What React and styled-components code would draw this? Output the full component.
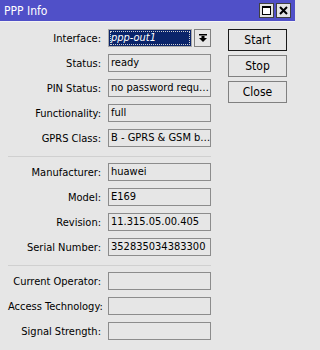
import React from "react";
import styled, { createGlobalStyle } from "styled-components";

const GlobalStyle = createGlobalStyle`
  html, body {
    margin: 0;
    padding: 0;
    background: #e6e6e6;
  }
  body {
    font-family: "DejaVu Sans Condensed", "DejaVu Sans", sans-serif;
    font-stretch: condensed;
    font-size: 11px;
    color: #000;
  }
`;

const Window = styled.div`
  width: 295px;
  height: 350px;
  background: #e6e6e6;
  display: flex;
  flex-direction: column;
  overflow: hidden;
`;

const TitleBar = styled.div`
  height: 22px;
  background: #5050c8;
  border-bottom: 1px solid #f4f4f4;
  display: flex;
  align-items: center;
  padding: 0 4px 0 4px;
  box-sizing: border-box;
`;

const Title = styled.div`
  flex: 1;
  color: #fff;
  font-size: 12px;
  padding-top: 1px;
`;

const TitleButtons = styled.div`
  display: flex;
  gap: 2px;
`;

const TitleButton = styled.div`
  width: 15px;
  height: 15px;
  box-sizing: border-box;
  background: #e4e4e4;
  border: 1px solid #404040;
  display: flex;
  align-items: center;
  justify-content: center;
`;

const Body = styled.div`
  display: flex;
  padding: 7px 0 0 8px;
  gap: 17px;
`;

const Form = styled.div`
  width: 203px;
  display: flex;
  flex-direction: column;
`;

const Section = styled.div`
  display: grid;
  grid-template-columns: 93px 103px;
  column-gap: 7px;
  row-gap: 7px;
  align-items: center;
`;

const Label = styled.div`
  text-align: right;
  white-space: nowrap;
`;

const Field = styled.div`
  height: 18px;
  box-sizing: border-box;
  border: 1px solid #8c8c8c;
  background: #e6e6e6;
  padding: 0 2px;
  line-height: 16px;
  white-space: nowrap;
  overflow: hidden;
`;

const Separator = styled.div`
  height: 1px;
  background: #d0d0d0;
  margin: 9px 0 6px 0;
`;

const ComboRow = styled.div`
  display: flex;
  gap: 2px;
  height: 18px;
`;

const ComboInput = styled.div`
  flex: 1;
  box-sizing: border-box;
  border: 1px solid #a8a8a8;
  background: #0a246a;
  padding: 1px;
`;

const ComboText = styled.div`
  height: 100%;
  box-sizing: border-box;
  outline: 1px dotted #d0d0d0;
  outline-offset: -1px;
  color: #fff;
  font-style: italic;
  line-height: 14px;
  padding-left: 1px;
`;

const ComboButton = styled.div`
  width: 17px;
  box-sizing: border-box;
  border: 1px solid #808080;
  background: #e6e6e6;
  display: flex;
  align-items: center;
  justify-content: center;
`;

const Buttons = styled.div`
  display: flex;
  flex-direction: column;
  gap: 4px;
`;

const Button = styled.div`
  width: 59px;
  height: 22px;
  box-sizing: border-box;
  border: 1px solid ${(p) => (p.$primary ? "#1a1a1a" : "#808080")};
  background: #e6e6e6;
  display: flex;
  align-items: center;
  justify-content: center;
  font-size: 12px;
`;

const MaximizeIcon = () => (
  <svg width="9" height="9" viewBox="0 0 9 9">
    <rect x="0.5" y="0.5" width="8" height="8" fill="#fff" stroke="#000" />
    <rect x="0" y="0" width="9" height="2" fill="#000" />
  </svg>
);

const CloseIcon = () => (
  <svg width="9" height="9" viewBox="0 0 9 9">
    <path d="M1 1 L8 8 M8 1 L1 8" stroke="#000" strokeWidth="2" />
  </svg>
);

const DropIcon = () => (
  <svg width="8" height="8" viewBox="0 0 8 8">
    <rect x="0" y="0" width="8" height="1.5" fill="#000" />
    <rect x="2.5" y="2" width="3" height="2" fill="#000" />
    <path d="M0 4 L8 4 L4 8 Z" fill="#000" />
  </svg>
);

const groups = [
  [
    ["Status", "ready"],
    ["PIN Status", "no password requ…"],
    ["Functionality", "full"],
    ["GPRS Class", "B - GPRS & GSM b…"],
  ],
  [
    ["Manufacturer", "huawei"],
    ["Model", "E169"],
    ["Revision", "11.315.05.00.405"],
    ["Serial Number", "352835034383300"],
  ],
  [
    ["Current Operator", ""],
    ["Access Technology", ""],
    ["Signal Strength", ""],
  ],
];

export default function App() {
  return (
    <Window>
      <GlobalStyle />
      <TitleBar>
        <Title>PPP Info</Title>
        <TitleButtons>
          <TitleButton>
            <MaximizeIcon />
          </TitleButton>
          <TitleButton>
            <CloseIcon />
          </TitleButton>
        </TitleButtons>
      </TitleBar>
      <Body>
        <Form>
          {groups.map((rows, gi) => (
            <React.Fragment key={gi}>
              {gi > 0 && <Separator />}
              <Section>
                {gi === 0 && (
                  <>
                    <Label>Interface:</Label>
                    <ComboRow>
                      <ComboInput>
                        <ComboText>ppp-out1</ComboText>
                      </ComboInput>
                      <ComboButton>
                        <DropIcon />
                      </ComboButton>
                    </ComboRow>
                  </>
                )}
                {rows.map(([label, value]) => (
                  <React.Fragment key={label}>
                    <Label>{label}:</Label>
                    <Field>{value}</Field>
                  </React.Fragment>
                ))}
              </Section>
            </React.Fragment>
          ))}
        </Form>
        <Buttons>
          <Button $primary>Start</Button>
          <Button>Stop</Button>
          <Button>Close</Button>
        </Buttons>
      </Body>
    </Window>
  );
}
